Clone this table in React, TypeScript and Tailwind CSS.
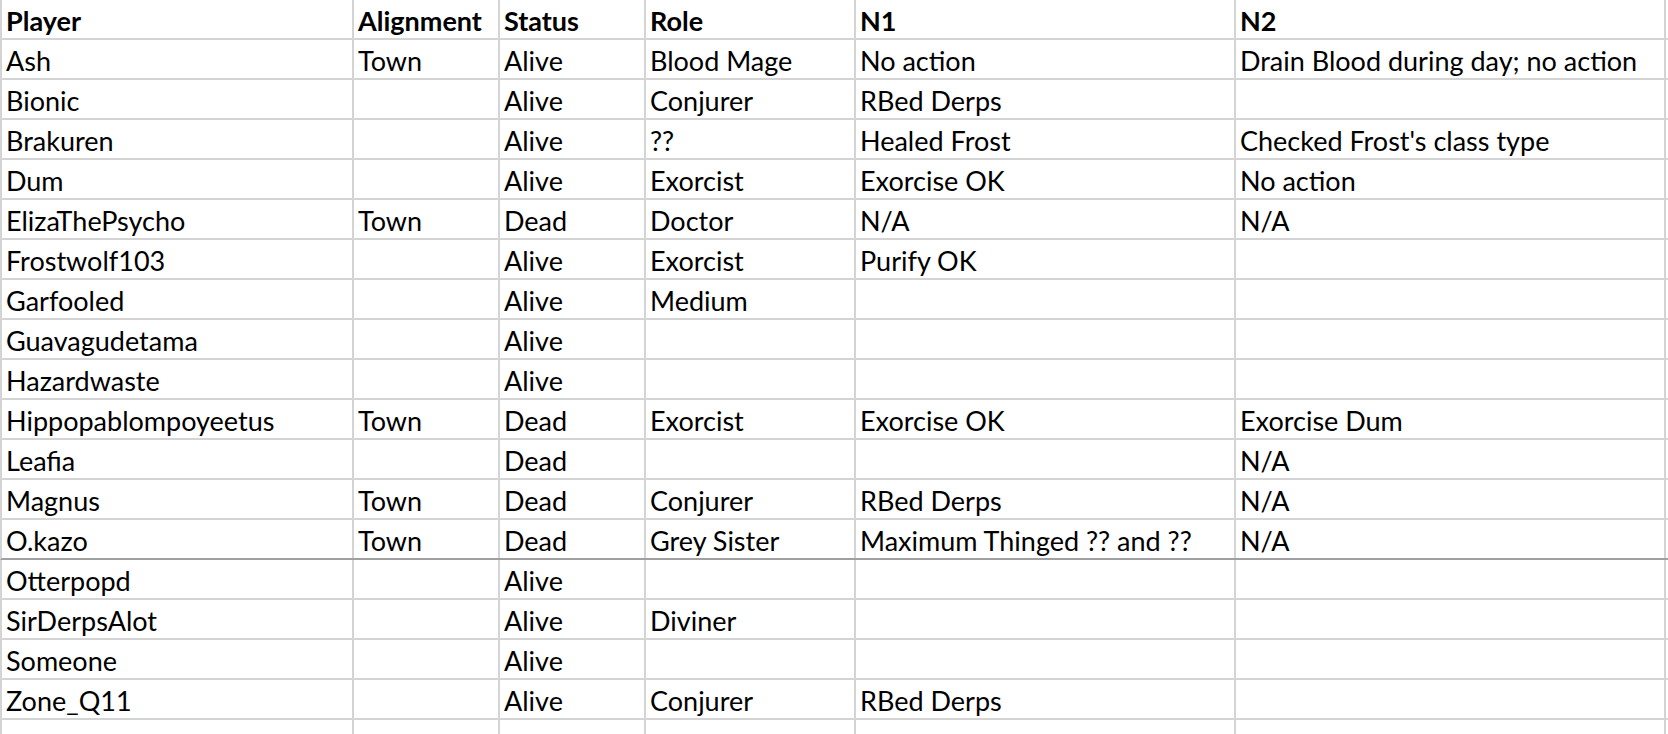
const columns = ["Player", "Alignment", "Status", "Role", "N1", "N2"];

const widths = ["w-[352px]", "w-[146px]", "w-[146px]", "w-[210px]", "w-[380px]", "w-[430px]"];

const rows: string[][] = [
  ["Ash", "Town", "Alive", "Blood Mage", "No action", "Drain Blood during day; no action"],
  ["Bionic", "", "Alive", "Conjurer", "RBed Derps", ""],
  ["Brakuren", "", "Alive", "??", "Healed Frost", "Checked Frost's class type"],
  ["Dum", "", "Alive", "Exorcist", "Exorcise OK", "No action"],
  ["ElizaThePsycho", "Town", "Dead", "Doctor", "N/A", "N/A"],
  ["Frostwolf103", "", "Alive", "Exorcist", "Purify OK", ""],
  ["Garfooled", "", "Alive", "Medium", "", ""],
  ["Guavagudetama", "", "Alive", "", "", ""],
  ["Hazardwaste", "", "Alive", "", "", ""],
  ["Hippopablompoyeetus", "Town", "Dead", "Exorcist", "Exorcise OK", "Exorcise Dum"],
  ["Leafia", "", "Dead", "", "", "N/A"],
  ["Magnus", "Town", "Dead", "Conjurer", "RBed Derps", "N/A"],
  ["O.kazo", "Town", "Dead", "Grey Sister", "Maximum Thinged ?? and ??", "N/A"],
  ["Otterpopd", "", "Alive", "", "", ""],
  ["SirDerpsAlot", "", "Alive", "Diviner", "", ""],
  ["Someone", "", "Alive", "", "", ""],
  ["Zone_Q11", "", "Alive", "Conjurer", "RBed Derps", ""],
  ["", "", "", "", "", ""],
];

function Row({ cells, header, divider }: { cells: string[]; header?: boolean; divider?: boolean }) {
  return (
    <div
      className={`flex h-[40px] border-l-2 border-b-2 border-l-[#d4d4d4] ${
        divider ? "border-b-[#a0a0a0]" : "border-b-[#d4d4d4]"
      }`}
    >
      {cells.map((text, i) => (
        <div
          key={i}
          className={`${widths[i]} shrink-0 border-r-2 border-[#d4d4d4] pl-[4px] pt-[6px] text-[27px] leading-[30px] whitespace-nowrap overflow-hidden ${
            header ? "font-bold" : ""
          }`}
        >
          {text}
        </div>
      ))}
    </div>
  );
}

export default function App() {
  return (
    <div className="h-[734px] w-[1668px] overflow-hidden bg-white text-black [font-family:Lato,'Liberation_Sans',sans-serif]">
      <Row cells={columns} header />
      {rows.map((r, i) => (
        <Row key={i} cells={r} divider={i === 12} />
      ))}
    </div>
  );
}
